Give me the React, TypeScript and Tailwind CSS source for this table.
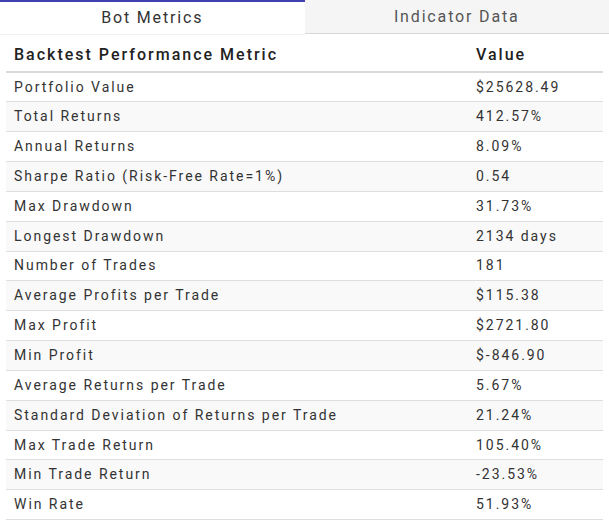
import React from 'react';

const rows: [string, string][] = [
  ['Portfolio Value', '$25628.49'],
  ['Total Returns', '412.57%'],
  ['Annual Returns', '8.09%'],
  ['Sharpe Ratio (Risk-Free Rate=1%)', '0.54'],
  ['Max Drawdown', '31.73%'],
  ['Longest Drawdown', '2134 days'],
  ['Number of Trades', '181'],
  ['Average Profits per Trade', '$115.38'],
  ['Max Profit', '$2721.80'],
  ['Min Profit', '$-846.90'],
  ['Average Returns per Trade', '5.67%'],
  ['Standard Deviation of Returns per Trade', '21.24%'],
  ['Max Trade Return', '105.40%'],
  ['Min Trade Return', '-23.53%'],
  ['Win Rate', '51.93%'],
];

const App: React.FC = () => {
  return (
    <div className="w-[609px] h-[523px] bg-white overflow-hidden font-['Roboto',sans-serif] text-[#333]">
      {/* tabs */}
      <div className="flex h-[34px]">
        <div className="flex-1 flex items-center justify-center border-t-2 border-[#4040b0] bg-white text-[16px] tracking-[0.115em] text-[#333] shadow-[0_1px_0_#f0f0f0]">
          Bot Metrics
        </div>
        <div className="flex-1 flex items-center justify-center bg-[#f5f5f5] border-b border-[#d8d8d8] text-[16px] tracking-[0.115em] text-[#555]">
          Indicator Data
        </div>
      </div>

      <div className="px-[6px]">
        <table className="w-full border-collapse">
          <thead>
            <tr className="border-b-2 border-[#d9d9d9]">
              <th className="h-[38px] pl-2 pt-[4px] text-left text-[16px] font-medium tracking-[0.125em] text-[#222] w-[462px]">
                Backtest Performance Metric
              </th>
              <th className="h-[38px] pl-2 pt-[4px] text-left text-[16px] font-medium tracking-[0.125em] text-[#222]">
                Value
              </th>
            </tr>
          </thead>
          <tbody>
            {rows.map(([k, v], i) => (
              <tr key={k} className={`border-b border-[#dedede] ${i % 2 === 1 ? 'bg-[#f9f9f9]' : 'bg-white'}`}>
                <td className="h-[29.85px] pl-2 text-[14px] tracking-[0.14em]">{k}</td>
                <td className="h-[29.85px] pl-2 text-[14px] tracking-[0.14em]">{v}</td>
              </tr>
            ))}
          </tbody>
        </table>
      </div>
    </div>
  );
};

export default App;
